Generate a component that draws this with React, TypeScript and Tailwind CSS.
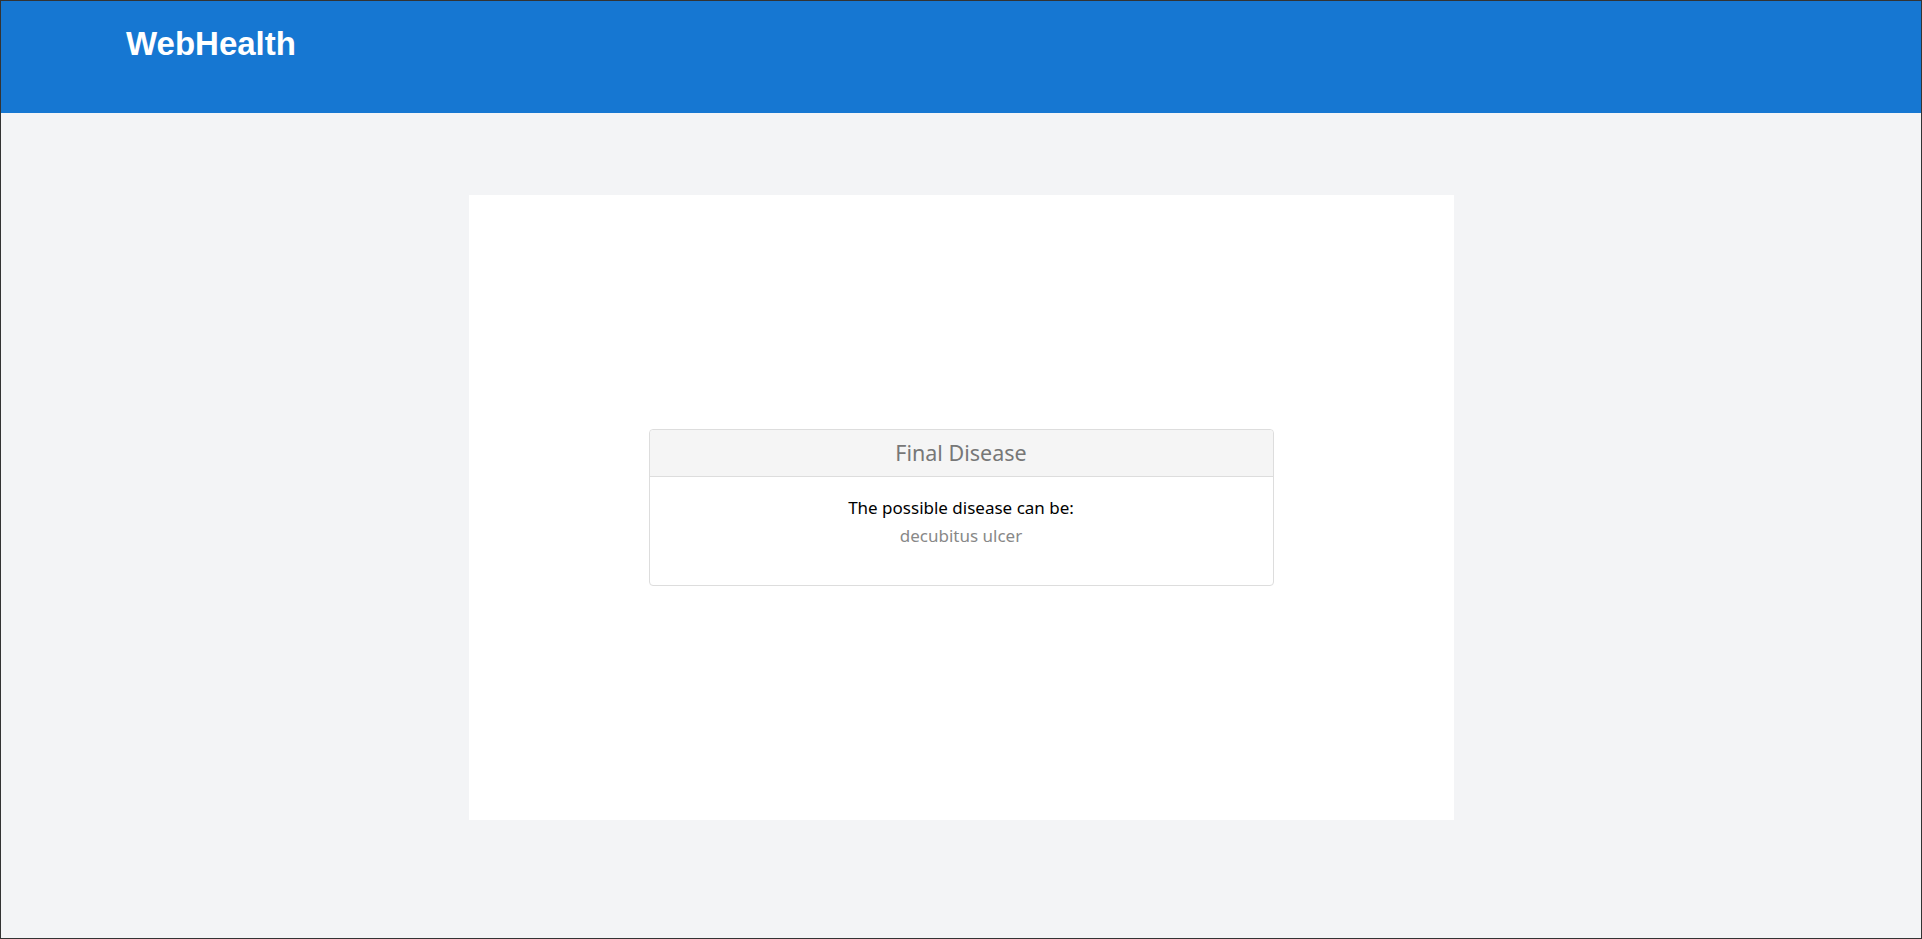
import React from 'react';

const App: React.FC = () => {
	return <div className="h-[939px] w-full flex flex-col border border-[#333] bg-[#f3f4f6]">
		<header className="h-[112px] shrink-0 bg-[#1677d2] pl-[125px] pt-[24px]">
			<h1 className="text-[33px] leading-[38px] font-bold text-white font-['Liberation_Sans',Arial,sans-serif]">WebHealth</h1>
		</header>
		<main className="flex-grow flex justify-center pt-[82px]">
			<div className="w-[985px] h-[625px] bg-white flex items-center justify-center">
				<FinalDiseasePanel disease="decubitus ulcer" />
			</div>
		</main>
	</div>
};

type FinalDiseasePanelProps = {
	disease: string;
}

const FinalDiseasePanel: React.FC<FinalDiseasePanelProps> = ({ disease }) => {
	return <div className="w-[625px] border border-[#ddd] rounded-[4px] bg-white font-['Noto_Sans','Open_Sans',sans-serif]">
		<div className="h-[47px] flex items-center justify-center bg-[#f5f5f5] border-b border-[#ddd] rounded-t-[4px]">
			<h3 className="text-[21.5px] text-[#777]">Final Disease</h3>
		</div>
		<div className="pt-[18px] pb-[36px] text-center">
			<p className="text-[17px] leading-[26px] text-black">The possible disease can be:</p>
			<p className="text-[17px] leading-[26px] mt-[2px] text-[#888]">{disease}</p>
		</div>
	</div>
}

export default App;
